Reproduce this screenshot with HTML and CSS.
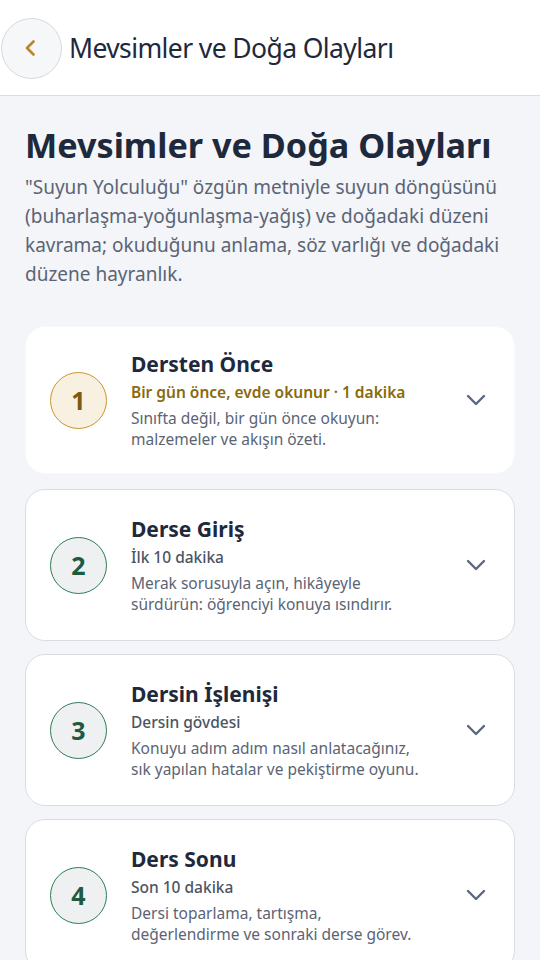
FILE: index.html
```html
<!DOCTYPE html>
<html lang="tr">
<head>
<meta charset="utf-8">
<title>Mevsimler ve Doğa Olayları</title>
<link rel="stylesheet" href="styles.css">
</head>
<body>
<header class="topbar">
  <button class="back" aria-label="Geri">
    <svg width="20" height="20" viewBox="0 0 20 20"><path d="M12.5 3.5 L6 10 L12.5 16.5" fill="none" stroke="#b8862b" stroke-width="2.6" stroke-linecap="round" stroke-linejoin="round"/></svg>
  </button>
  <div class="topbar-title">Mevsimler ve Doğa Olayları</div>
</header>
<main class="content">
  <h1 class="page-title">Mevsimler ve Doğa Olayları</h1>
  <p class="intro">"Suyun Yolculuğu" özgün metniyle suyun döngüsünü (buharlaşma-yoğunlaşma-yağış) ve doğadaki düzeni kavrama; okuduğunu anlama, söz varlığı ve doğadaki düzene hayranlık.</p>
  <div class="steps">
    <div class="card card-first">
      <div class="num num-gold">1</div>
      <div class="card-body">
        <div class="card-title">Dersten Önce</div>
        <div class="card-sub sub-gold">Bir gün önce, evde okunur · 1 dakika</div>
        <div class="card-desc">Sınıfta değil, bir gün önce okuyun: malzemeler ve akışın özeti.</div>
      </div>
      <svg class="chev" width="22" height="22" viewBox="0 0 22 22"><path d="M3 7 L11 15 L19 7" fill="none" stroke="#5b6780" stroke-width="2.4" stroke-linecap="round" stroke-linejoin="round"/></svg>
    </div>
    <div class="card">
      <div class="num num-green">2</div>
      <div class="card-body">
        <div class="card-title">Derse Giriş</div>
        <div class="card-sub">İlk 10 dakika</div>
        <div class="card-desc">Merak sorusuyla açın, hikâyeyle sürdürün: öğrenciyi konuya ısındırır.</div>
      </div>
      <svg class="chev" width="22" height="22" viewBox="0 0 22 22"><path d="M3 7 L11 15 L19 7" fill="none" stroke="#5b6780" stroke-width="2.4" stroke-linecap="round" stroke-linejoin="round"/></svg>
    </div>
    <div class="card">
      <div class="num num-green">3</div>
      <div class="card-body">
        <div class="card-title">Dersin İşlenişi</div>
        <div class="card-sub">Dersin gövdesi</div>
        <div class="card-desc">Konuyu adım adım nasıl anlatacağınız, sık yapılan hatalar ve pekiştirme oyunu.</div>
      </div>
      <svg class="chev" width="22" height="22" viewBox="0 0 22 22"><path d="M3 7 L11 15 L19 7" fill="none" stroke="#5b6780" stroke-width="2.4" stroke-linecap="round" stroke-linejoin="round"/></svg>
    </div>
    <div class="card">
      <div class="num num-green">4</div>
      <div class="card-body">
        <div class="card-title">Ders Sonu</div>
        <div class="card-sub">Son 10 dakika</div>
        <div class="card-desc">Dersi toparlama, tartışma, değerlendirme ve sonraki derse görev.</div>
      </div>
      <svg class="chev" width="22" height="22" viewBox="0 0 22 22"><path d="M3 7 L11 15 L19 7" fill="none" stroke="#5b6780" stroke-width="2.4" stroke-linecap="round" stroke-linejoin="round"/></svg>
    </div>
  </div>
</main>
</body>
</html>
```
FILE: styles.css
```css
* { box-sizing: border-box; }
html, body { margin: 0; padding: 0; }
body {
  font-family: "Noto Sans", "Open Sans", sans-serif;
  background: #f3f5f9;
  color: #1e293b;
  width: 540px;
  height: 960px;
  overflow: hidden;
}
.topbar {
  height: 96px;
  background: #ffffff;
  border-bottom: 1px solid #d9dde3;
  display: flex;
  align-items: center;
  gap: 7px;
  padding-left: 1px;
}
.back {
  width: 61px;
  height: 61px;
  border-radius: 50%;
  border: 1px solid #d6d9de;
  background: #f6f7f8;
  display: flex;
  align-items: center;
  justify-content: center;
  padding: 0;
  margin-top: 1px;
}
.back svg { margin-right: 2px; }
.topbar-title {
  font-size: 26.5px;
  letter-spacing: -0.6px;
  color: #1e293b;
}
.content {
  padding: 24px 25px 0 25px;
}
.page-title {
  font-size: 34.2px;
  font-weight: 700;
  margin: 0;
  line-height: 50px;
  color: #1e293b;
  white-space: nowrap;
}
.intro {
  margin: 3px 0 0 0;
  font-size: 19px;
  line-height: 29px;
  color: #5b6475;
}
.steps {
  margin-top: 37px;
  display: flex;
  flex-direction: column;
  gap: 13px;
}
.card {
  background: #ffffff;
  border: 1px solid #d9dde3;
  border-radius: 20px;
  display: flex;
  align-items: center;
  padding: 0 27px 0 24px;
  height: 152px;
  flex: none;
}
.card-first {
  border-color: #f8f9fb;
  height: 148px;
  margin-bottom: 2px;
}
.num {
  width: 57px;
  height: 57px;
  border-radius: 50%;
  flex: none;
  display: flex;
  align-items: center;
  justify-content: center;
  font-size: 25px;
  font-weight: 700;
}
.num-gold {
  background: #f8f1e2;
  border: 1.5px solid #c9962f;
  color: #7a5a12;
}
.num-green {
  background: #eef0f2;
  border: 1.5px solid #2e7d5b;
  color: #1e5a3e;
}
.card-body {
  flex: 1;
  margin-left: 24px;
}
.card-title {
  font-size: 21px;
  font-weight: 700;
  line-height: 28px;
  color: #1e293b;
}
.card-sub {
  font-size: 15.5px;
  font-weight: 500;
  line-height: 22px;
  color: #4b5563;
  margin-top: 3px;
}
.sub-gold { color: #8a6a0a; font-weight: 600; }
.card-desc {
  font-size: 15.5px;
  line-height: 21.5px;
  color: #5b6475;
  margin-top: 5px;
  max-width: 300px;
}
.chev { flex: none; margin-left: 10px; }
```
